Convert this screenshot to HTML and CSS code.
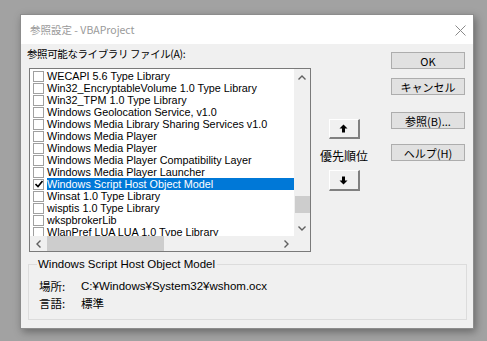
FILE: index.html
```
<!DOCTYPE html>
<html lang="ja">
<head>
  <meta charset="UTF-8">
  <title>参照設定 - VBAProject</title>
  <link rel="stylesheet" href="styles.css">
</head>
<body>
<div class="window">
  <div class="titlebar">
    <span class="title">参照設定 - VBAProject</span>
    <svg class="close" width="11" height="11" viewBox="0 0 11 11"><path d="M0.5 0.5 L10.5 10.5 M10.5 0.5 L0.5 10.5" stroke="#8a8a8a" stroke-width="1" fill="none"/></svg>
  </div>
  <div class="dialog">
    <div class="top">
      <div class="left">
        <div class="label">参照可能なライブラリ ファイル(A):</div>
        <div class="listbox">
          <div class="list-main">
            <div class="list" id="list"></div>
            <div class="vscroll">
              <div class="sb-btn"><svg width="8" height="5" viewBox="0 0 8 5"><path d="M0.5 4.5 L4 1 L7.5 4.5" stroke="#606060" stroke-width="1.4" fill="none"/></svg></div>
              <div class="vtrack"><div class="vthumb"></div></div>
              <div class="sb-btn"><svg width="8" height="5" viewBox="0 0 8 5"><path d="M0.5 0.5 L4 4 L7.5 0.5" stroke="#606060" stroke-width="1.4" fill="none"/></svg></div>
            </div>
          </div>
          <div class="hscroll">
            <div class="sb-btn"><svg width="5" height="8" viewBox="0 0 5 8"><path d="M4.5 0.5 L1 4 L4.5 7.5" stroke="#606060" stroke-width="1.4" fill="none"/></svg></div>
            <div class="htrack"><div class="hthumb"></div></div>
            <div class="sb-btn"><svg width="5" height="8" viewBox="0 0 5 8"><path d="M0.5 0.5 L4 4 L0.5 7.5" stroke="#606060" stroke-width="1.4" fill="none"/></svg></div>
            <div class="corner"></div>
          </div>
        </div>
      </div>
      <div class="middle">
        <div class="arrow-btn up"><svg width="9" height="9" viewBox="0 0 9 9"><path d="M4.5 0.5 L8.5 4.5 H6 V8.5 H3 V4.5 H0.5 Z" fill="#000"/></svg></div>
        <div class="priority">優先順位</div>
        <div class="arrow-btn down"><svg width="9" height="9" viewBox="0 0 9 9"><path d="M4.5 8.5 L8.5 4.5 H6 V0.5 H3 V4.5 H0.5 Z" fill="#000"/></svg></div>
      </div>
      <div class="right">
        <button class="btn ok">OK</button>
        <button class="btn cancel">キャンセル</button>
        <button class="btn browse">参照(B)...</button>
        <button class="btn help">ヘルプ(H)</button>
      </div>
    </div>
    <fieldset class="info">
      <legend>Windows Script Host Object Model</legend>
      <div class="info-row"><span class="key">場所:</span><span>C:¥Windows¥System32¥wshom.ocx</span></div>
      <div class="info-row"><span class="key">言語:</span><span>標準</span></div>
    </fieldset>
  </div>
</div>

<script>
  const libs = [
    'WECAPI 5.6 Type Library',
    'Win32_EncryptableVolume 1.0 Type Library',
    'Win32_TPM 1.0 Type Library',
    'Windows Geolocation Service, v1.0',
    'Windows Media Library Sharing Services v1.0',
    'Windows Media Player',
    'Windows Media Player',
    'Windows Media Player Compatibility Layer',
    'Windows Media Player Launcher',
    'Windows Script Host Object Model',
    'Winsat 1.0 Type Library',
    'wisptis 1.0 Type Library',
    'wkspbrokerLib',
    'WlanPref LUA LUA 1.0 Type Library'
  ];
  const list = document.getElementById('list');
  libs.forEach(function(name, i) {
    const row = document.createElement('div');
    const sel = i === 9;
    row.className = 'row' + (sel ? ' selected' : '');
    row.innerHTML = '<span class="check">' +
      (sel ? '<svg width="8" height="8" viewBox="0 0 8 8"><path d="M0.5 4 L3 6.5 L7.5 1" stroke="#000" stroke-width="1.6" fill="none"/></svg>' : '') +
      '</span><span class="name">' + name + '</span>';
    list.appendChild(row);
  });
</script>
</body>
</html>
```

FILE: styles.css
```
html, body { margin: 0; padding: 0; background: #a2a2a2; height: 100%; }
body { font-family: "Liberation Sans", "Noto Sans CJK JP", sans-serif; font-size: 12px; color: #000; }
.window { margin: 14px 0 0 20px; width: 452px; height: 313px; border: 1px solid #8c8c8c; background: #f0f0f0; box-shadow: 2px 3px 8px rgba(0,0,0,0.35); display: flex; flex-direction: column; }
.titlebar { height: 29px; background: #fff; display: flex; align-items: center; justify-content: space-between; padding: 0 7px 0 9px; }
.title { color: #9a9a9a; font-family: "Noto Sans CJK JP", sans-serif; font-size: 10.5px; }
.close { margin-top: 1px; }
.dialog { flex: 1; padding: 3px 8px 0 6px; display: flex; flex-direction: column; }
.top { display: flex; }
.label { height: 14px; line-height: 14px; font-family: "Noto Sans CJK JP", sans-serif; font-size: 10.5px; letter-spacing: -0.4px; margin-bottom: 7px; }
.listbox { margin-left: 2px; width: 280px; height: 182px; border: 1px solid #7a7a7a; background: #fff; display: flex; flex-direction: column; }
.list-main { display: flex; height: 167px; }
.list { flex: 1; overflow: hidden; padding-top: 1px; }
.row { height: 12px; display: flex; align-items: center; white-space: nowrap; }
.check { width: 9px; height: 9px; border: 1px solid #a0a0a0; margin: 0 3px 0 3px; flex: none; display: flex; align-items: center; justify-content: center; background: #fff; }
.name { line-height: 12px; font-size: 10.8px; }
.row.selected .name { background: #0078d7; color: #fff; flex: 1; }
.vscroll { width: 16px; background: #f0f0f0; display: flex; flex-direction: column; }
.sb-btn { width: 16px; height: 16px; display: flex; align-items: center; justify-content: center; flex: none; }
.vtrack { flex: 1; position: relative; }
.vthumb { position: absolute; left: 1px; right: 0; top: 111px; height: 17px; background: #cdcdcd; }
.hscroll { height: 15px; background: #f0f0f0; display: flex; }
.hscroll .sb-btn { height: 15px; }
.htrack { flex: 1; position: relative; }
.hthumb { position: absolute; left: 1px; top: 0; bottom: 0; width: 117px; background: #cdcdcd; }
.corner { width: 16px; background: #f0f0f0; }
.middle { width: 56px; margin-left: 5px; display: flex; flex-direction: column; align-items: center; }
.arrow-btn { width: 28px; height: 17px; background: #f0f0f0; border-top: 1px solid #fff; border-left: 1px solid #fff; border-right: 2px solid #808080; border-bottom: 2px solid #808080; display: flex; align-items: center; justify-content: center; }
.arrow-btn.up { margin-top: 72px; }
.priority { margin-top: 10px; line-height: 14px; font-family: "Noto Sans CJK JP", sans-serif; font-size: 12px; }
.arrow-btn.down { margin-top: 7px; height: 18px; }
.right { margin-left: 19px; display: flex; flex-direction: column; }
.btn { width: 74px; height: 17px; padding: 0; background: #e1e1e1; border: 1px solid #adadad; font-family: "Noto Sans CJK JP", sans-serif; font-size: 11px; line-height: 14px; color: #000; }
.ok { margin-top: 5px; }
.cancel { margin-top: 9px; }
.browse { margin-top: 17px; }
.help { margin-top: 15px; }
.info { margin: 5px 0 0 1px; width: 439px; height: 63px; padding: 0; border: 1px solid #dcdcdc; box-sizing: border-box; }
.info legend { margin-left: 8px; padding: 0 2px 0 1px; font-size: 11.5px; line-height: 14px; }
.info-row { display: flex; height: 17px; align-items: center; padding-left: 10px; font-size: 11.5px; }
.info-row:first-of-type { margin-top: 6px; }
.key { width: 42px; font-family: "Noto Sans CJK JP", sans-serif; }
```
